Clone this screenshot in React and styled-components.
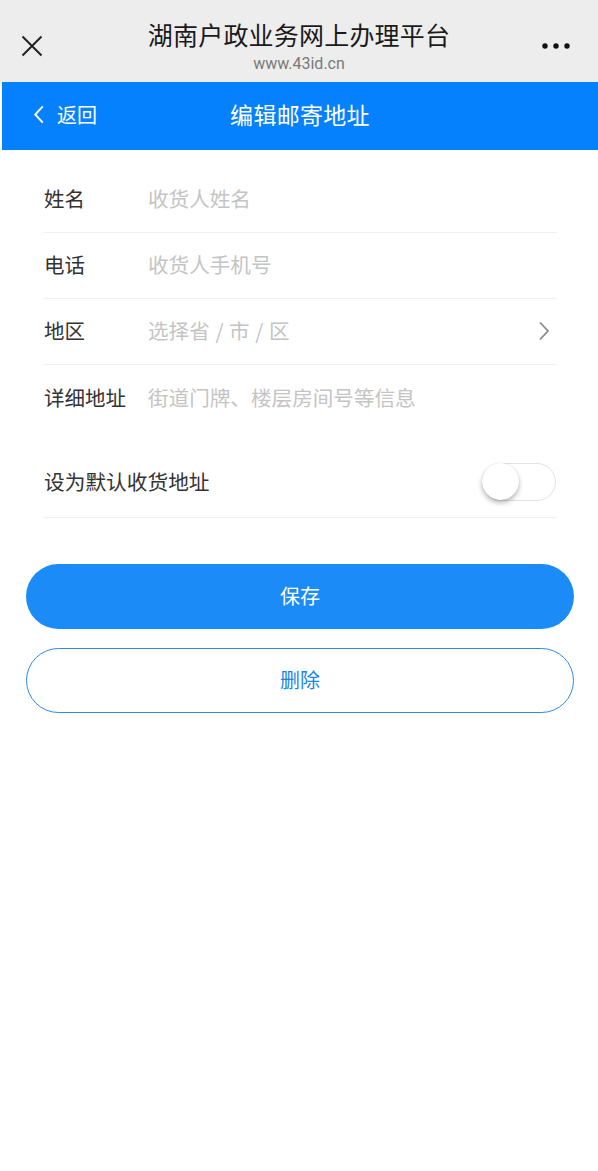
import React from "react";
import styled, { createGlobalStyle } from "styled-components";

const Global = createGlobalStyle`
  html, body {
    margin: 0;
    padding: 0;
    background: #ffffff;
  }
  body {
    font-family: "Noto Sans CJK SC", "Noto Sans", Roboto, sans-serif;
    -webkit-font-smoothing: antialiased;
  }
  * { box-sizing: border-box; }
`;

const Page = styled.div`
  width: 598px;
  min-height: 1171px;
  background: #fff;
`;

const BrowserBar = styled.div`
  height: 82px;
  background: #ededed;
  display: grid;
  grid-template-columns: 80px 1fr 80px;
  align-items: center;
`;

const BarIcon = styled.div`
  display: flex;
  align-items: center;
  justify-content: ${(p) => (p.$right ? "flex-end" : "flex-start")};
  padding: ${(p) => (p.$right ? "0 28px 0 0" : "0 0 0 21px")};
  margin-top: 10px;
`;

const TitleBlock = styled.div`
  display: flex;
  flex-direction: column;
  align-items: center;
  padding-top: 9px;
`;

const SiteTitle = styled.div`
  font-size: 25px;
  line-height: 32px;
  color: #1a1a1a;
  letter-spacing: 0.2px;
`;

const SiteUrl = styled.div`
  font-family: Roboto, "Liberation Sans", sans-serif;
  font-size: 16px;
  line-height: 20px;
  color: #7a7a7a;
  margin-top: 4px;
`;

const NavBar = styled.div`
  margin-left: 2px;
  height: 68px;
  padding-bottom: 4px;
  background: #0581fd;
  display: grid;
  grid-template-columns: 120px 1fr 120px;
  align-items: center;
  color: #fff;
`;

const Back = styled.div`
  display: flex;
  align-items: center;
  gap: 12px;
  padding-left: 31px;
  font-size: 20px;
`;

const NavTitle = styled.div`
  text-align: center;
  font-size: 23px;
  letter-spacing: 0.3px;
`;

const Form = styled.div`
  padding: 17px 41px 0 44px;
`;

const Row = styled.div`
  height: ${(p) => p.$h || 66}px;
  display: flex;
  align-items: center;
  padding-bottom: ${(p) => (p.$h ? 0 : 3)}px;
  border-bottom: ${(p) => (p.$last ? "none" : "1px solid #f1f1f1")};
`;

const Label = styled.div`
  width: 104px;
  flex-shrink: 0;
  font-size: 20.5px;
  color: #333;
  white-space: nowrap;
`;

const Placeholder = styled.div`
  flex: 1;
  font-size: 20.6px;
  color: #c4c4c4;
  white-space: nowrap;
  word-spacing: 1px;
`;

const ArrowSlot = styled.div`
  display: flex;
  align-items: center;
  margin-right: 7px;
  margin-top: 2px;
`;

const SwitchSection = styled.div`
  margin-top: 15px;
`;

const SwitchLabel = styled.div`
  flex: 1;
  font-size: 20.7px;
  color: #333;
  padding-bottom: 2px;
`;

const Track = styled.div`
  width: 74px;
  height: 38px;
  border-radius: 19px;
  border: 1px solid #e3e3e3;
  background: #fff;
  position: relative;
  margin-right: 1px;
`;

const Knob = styled.div`
  position: absolute;
  left: -1px;
  top: -1px;
  width: 37px;
  height: 37px;
  border-radius: 50%;
  background: #fff;
  box-shadow: 0 3px 5px rgba(0, 0, 0, 0.28), 0 0 1px rgba(0, 0, 0, 0.15);
`;

const Actions = styled.div`
  padding: 46px 24px 0 26px;
  display: flex;
  flex-direction: column;
  gap: 19px;
`;

const Button = styled.div`
  height: 65px;
  border-radius: 33px;
  display: flex;
  align-items: center;
  justify-content: center;
  font-size: 20px;
  padding-bottom: 2px;
  background: ${(p) => (p.$outline ? "#fff" : "#1b8bf7")};
  color: ${(p) => (p.$outline ? "#1b84ea" : "#fff")};
  border: ${(p) => (p.$outline ? "1px solid #2a8ae8" : "none")};
`;

const CloseIcon = () => (
  <svg width="22" height="22" viewBox="0 0 22 22">
    <path d="M1.5 1.5 L20.5 20.5 M20.5 1.5 L1.5 20.5" stroke="#222" strokeWidth="2" fill="none" />
  </svg>
);

const MoreIcon = () => (
  <svg width="28" height="8" viewBox="0 0 28 8">
    <circle cx="3" cy="4" r="2.7" fill="#111" />
    <circle cx="14" cy="4" r="2.7" fill="#111" />
    <circle cx="25" cy="4" r="2.7" fill="#111" />
  </svg>
);

const Chevron = ({ color, w = 12, h = 20, sw = 2, left }) => (
  <svg width={w} height={h} viewBox="0 0 12 20">
    <path
      d={left ? "M10 1.5 L2 10 L10 18.5" : "M2 1.5 L10 10 L2 18.5"}
      stroke={color}
      strokeWidth={sw}
      fill="none"
    />
  </svg>
);

const fields = [
  { label: "姓名", hint: "收货人姓名" },
  { label: "电话", hint: "收货人手机号" },
  { label: "地区", hint: "选择省 / 市 / 区", arrow: true },
  { label: "详细地址", hint: "街道门牌、楼层房间号等信息", last: true },
];

export default function App() {
  return (
    <Page>
      <Global />
      <BrowserBar>
        <BarIcon>
          <CloseIcon />
        </BarIcon>
        <TitleBlock>
          <SiteTitle>湖南户政业务网上办理平台</SiteTitle>
          <SiteUrl>www.43id.cn</SiteUrl>
        </TitleBlock>
        <BarIcon $right>
          <MoreIcon />
        </BarIcon>
      </BrowserBar>
      <NavBar>
        <Back>
          <Chevron color="#fff" left w={12} h={19} sw={2} />
          <span>返回</span>
        </Back>
        <NavTitle>编辑邮寄地址</NavTitle>
        <div />
      </NavBar>
      <Form>
        {fields.map((f) => (
          <Row key={f.label} $last={f.last}>
            <Label>{f.label}</Label>
            <Placeholder>{f.hint}</Placeholder>
            {f.arrow && (
              <ArrowSlot>
                <Chevron color="#8a8a8a" w={12} h={20} sw={1.8} />
              </ArrowSlot>
            )}
          </Row>
        ))}
        <SwitchSection>
          <Row $h={72}>
            <SwitchLabel>设为默认收货地址</SwitchLabel>
            <Track>
              <Knob />
            </Track>
          </Row>
        </SwitchSection>
      </Form>
      <Actions>
        <Button>保存</Button>
        <Button $outline>删除</Button>
      </Actions>
    </Page>
  );
}
